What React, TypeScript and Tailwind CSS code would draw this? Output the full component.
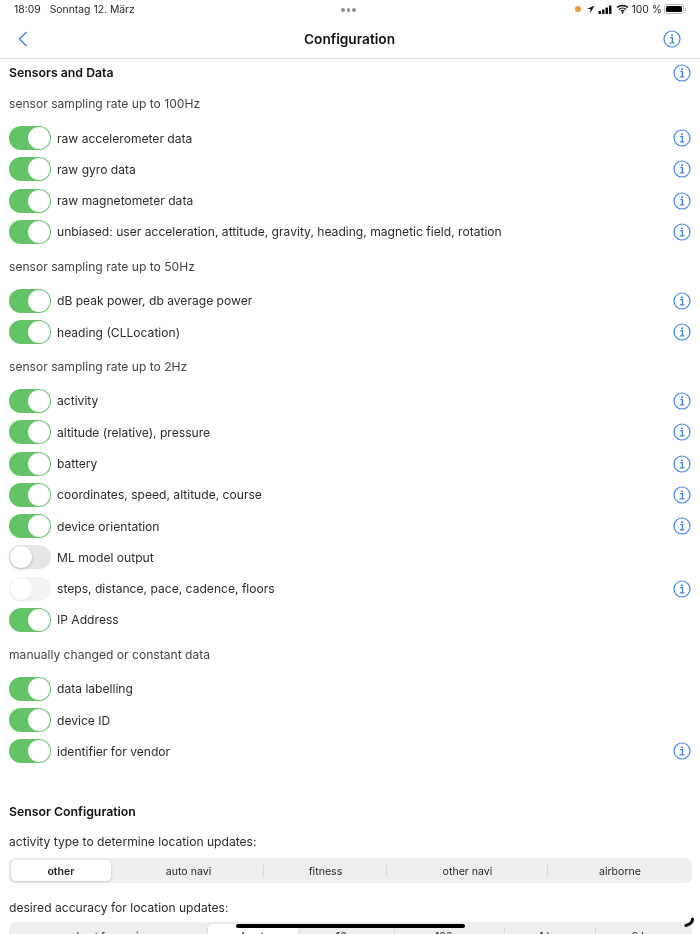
import React from "react";

const font = { fontFamily: '"Inter", "Liberation Sans", sans-serif' };

function Info() {
  return (
    <svg width="18" height="18" viewBox="0 0 18 18" fill="none" className="shrink-0">
      <circle cx="9" cy="9" r="8" stroke="#3b82f6" strokeWidth="1.2" />
      <path d="M7.2 7.7h2.2v5M6.9 12.8h4.4" stroke="#3b82f6" strokeWidth="1.3" />
      <circle cx="9" cy="5.2" r="1.05" fill="#3b82f6" />
    </svg>
  );
}

function Toggle({ state }: { state: "on" | "off" | "dim" }) {
  if (state === "on") {
    return (
      <div className="relative h-[24px] w-[42px] shrink-0 rounded-full bg-[#62c466]">
        <div className="absolute right-[1px] top-[1px] h-[22px] w-[22px] rounded-full bg-white" />
      </div>
    );
  }
  const dim = state === "dim";
  return (
    <div className={dim ? "relative h-[24px] w-[42px] shrink-0 rounded-full bg-[#f3f3f3]" : "relative h-[24px] w-[42px] shrink-0 rounded-full bg-[#e6e6e6]"}>
      <div className={dim ? "absolute left-[1px] top-[1px] h-[22px] w-[22px] rounded-full bg-white shadow-[0_1px_2px_rgba(0,0,0,0.08)]" : "absolute left-[1px] top-[1px] h-[22px] w-[22px] rounded-full bg-white shadow-[0_1px_3px_rgba(0,0,0,0.25)]"} />
    </div>
  );
}

function Row({ label, state = "on", info = true }: { label: string; state?: "on" | "off" | "dim"; info?: boolean }) {
  return (
    <div className="flex h-[31.3px] items-center pl-[9px] pr-[9px]">
      <Toggle state={state} />
      <span className="ml-[6px] flex-1 pt-[1px] text-[12.1px] text-[#2b2b2b]">{label}</span>
      {info && <Info />}
    </div>
  );
}

function Label({ children }: { children: React.ReactNode }) {
  return <div className="flex h-[37.5px] items-center pl-[9px] pt-[1px] text-[12.1px] text-[#444444]">{children}</div>;
}

function Group({ title, rows }: { title: string; rows: { l: string; s?: "on" | "off" | "dim"; i?: boolean }[] }) {
  return (
    <div>
      <Label>{title}</Label>
      {rows.map((r) => (
        <Row key={r.l} label={r.l} state={r.s} info={r.i} />
      ))}
    </div>
  );
}

function Seg({ w, label, selected, divider, low }: { w: string; label: string; selected?: boolean; divider?: boolean; low?: boolean }) {
  return (
    <div className={`${w} ${low ? "pt-[4px]" : "pt-[2px]"} relative flex h-full items-center justify-center text-[10.6px] text-[#262626]`}>
      {selected && (
        <div className="absolute inset-y-[2px] left-[2px] right-[2px] rounded-[5px] bg-white shadow-[0_1px_3px_rgba(0,0,0,0.15)]" />
      )}
      {divider && <div className="absolute bottom-[6px] right-0 top-[6px] w-px bg-[#d9d9d9]" />}
      <span className={selected ? "relative font-semibold" : "relative"}>{label}</span>
    </div>
  );
}

export default function App() {
  return (
    <div style={font} className="relative h-[934px] w-[700px] overflow-hidden bg-white blur-[0.35px]">
      {/* status bar */}
      <div className="relative flex h-[19px] items-center pl-[14px] pr-[14px] text-[10.4px] text-[#262626]">
        <span>18:09</span>
        <span className="ml-[9px]">Sonntag 12. März</span>
        <div className="absolute left-[341px] top-[8px] flex gap-[2px]">
          <div className="h-[3.5px] w-[3.5px] rounded-full bg-[#8e8e8e]" />
          <div className="h-[3.5px] w-[3.5px] rounded-full bg-[#8e8e8e]" />
          <div className="h-[3.5px] w-[3.5px] rounded-full bg-[#8e8e8e]" />
        </div>
        <div className="ml-auto flex items-center">
          <div className="h-[6px] w-[6px] rounded-full bg-[#f59a38]" />
          <svg width="9" height="9" viewBox="0 0 9 9" className="ml-[5px]">
            <path d="M8.5.5 1 4h3.4v4z" fill="#111" />
          </svg>
          <svg width="14" height="9" viewBox="0 0 14 9" className="ml-[3px]">
            <rect x="0.5" y="6" width="2.5" height="3" rx=".5" fill="#111" />
            <rect x="4" y="4.5" width="2.5" height="4.5" rx=".5" fill="#111" />
            <rect x="7.5" y="2.5" width="2.5" height="6.5" rx=".5" fill="#111" />
            <rect x="11" y="0.5" width="2.5" height="8.5" rx=".5" fill="#111" />
          </svg>
          <svg width="13" height="10" viewBox="0 0 13 10" fill="none" className="ml-[4px]">
            <path d="M1 3.6c3-2.9 8-2.9 11 0M2.9 5.500c2-1.900 5.200-1.900 7.200 0M4.800 7.200c.9-.8 2.500-.8 3.400 0" stroke="#111" strokeWidth="1.4" />
            <circle cx="6.5" cy="8.800" r="1" fill="#111" />
          </svg>
          <span className="ml-[3px]">100 %</span>
          <div className="ml-[2px] flex items-center">
            <div className="h-[10px] w-[20px] rounded-[3px] border border-[#b5b5b5] p-[1px]">
              <div className="h-full w-full rounded-[1.5px] bg-black" />
            </div>
            <div className="ml-[1px] h-[3px] w-px bg-[#b5b5b5]" />
          </div>
        </div>
      </div>

      {/* nav bar */}
      <div className="flex h-[40px] items-center border-b border-[#dedede] pl-[18px] pr-[19px]">
        <div className="flex-1">
          <svg width="10" height="16" viewBox="0 0 10 16" fill="none" className="block">
            <path d="M8.5 1 1.5 8l7 7" stroke="#3b82f6" strokeWidth="1.4" />
          </svg>
        </div>
        <span className="pt-[1px] text-[13.7px] font-semibold text-[#111]">Configuration</span>
        <div className="flex flex-1 justify-end">
          <Info />
        </div>
      </div>

      {/* sensors */}
      <div className="flex h-[26px] items-center pl-[9px] pr-[9px] pt-[2px]">
        <span className="flex-1 pt-[1px] text-[12.3px] font-semibold text-[#111]">Sensors and Data</span>
        <Info />
      </div>

      <Group
        title="sensor sampling rate up to 100Hz"
        rows={[
          { l: "raw accelerometer data" },
          { l: "raw gyro data" },
          { l: "raw magnetometer data" },
          { l: "unbiased: user acceleration, attitude, gravity, heading, magnetic field, rotation" },
        ]}
      />
      <Group
        title="sensor sampling rate up to 50Hz"
        rows={[{ l: "dB peak power, db average power" }, { l: "heading (CLLocation)" }]}
      />
      <Group
        title="sensor sampling rate up to 2Hz"
        rows={[
          { l: "activity" },
          { l: "altitude (relative), pressure" },
          { l: "battery" },
          { l: "coordinates, speed, altitude, course" },
          { l: "device orientation" },
          { l: "ML model output", s: "off", i: false },
          { l: "steps, distance, pace, cadence, floors", s: "dim" },
          { l: "IP Address", i: false },
        ]}
      />
      <Group
        title="manually changed or constant data"
        rows={[
          { l: "data labelling", i: false },
          { l: "device ID", i: false },
          { l: "identifier for vendor" },
        ]}
      />

      {/* sensor configuration */}
      <div className="mt-[30px] flex h-[30px] items-center pl-[9px] text-[12.3px] font-semibold text-[#111]">
        Sensor Configuration
      </div>
      <div className="flex h-[31px] items-center pl-[9px] text-[12.1px] text-[#2b2b2b]">
        activity type to determine location updates:
      </div>
      <div className="ml-[9px] flex h-[25px] w-[683px] rounded-[6px] bg-[#eeeeee]">
        <Seg w="w-[104px]" label="other" selected />
        <Seg w="w-[151px]" label="auto navi" divider />
        <Seg w="w-[123px]" label="fitness" divider />
        <Seg w="w-[161px]" label="other navi" divider />
        <Seg w="w-[144px]" label="airborne" />
      </div>
      <div className="flex h-[39px] items-center pl-[9px] pt-[11px] text-[12.1px] text-[#2b2b2b]">
        desired accuracy for location updates:
      </div>
      <div className="ml-[9px] flex h-[25px] w-[683px] rounded-[6px] bg-[#eeeeee]">
        <Seg w="w-[197px]" label="best for navi" low />
        <Seg w="w-[94px]" label="best" selected low />
        <Seg w="w-[95px]" label="10 m" divider low />
        <Seg w="w-[110px]" label="100 m" divider low />
        <Seg w="w-[91px]" label="1 km" divider low />
        <Seg w="w-[96px]" label="3 km" low />
      </div>

      {/* home indicator */}
      <div className="absolute left-[236px] top-[924px] h-[4px] w-[229px] rounded-full bg-black" />
      <svg width="16" height="14" viewBox="0 0 16 14" fill="none" className="absolute left-[680px] top-[917px]">
        <path d="M12.5 2c0 3-1.500 5-6.500 6.500" stroke="#000" strokeWidth="3" strokeLinecap="round" />
      </svg>
    </div>
  );
}
